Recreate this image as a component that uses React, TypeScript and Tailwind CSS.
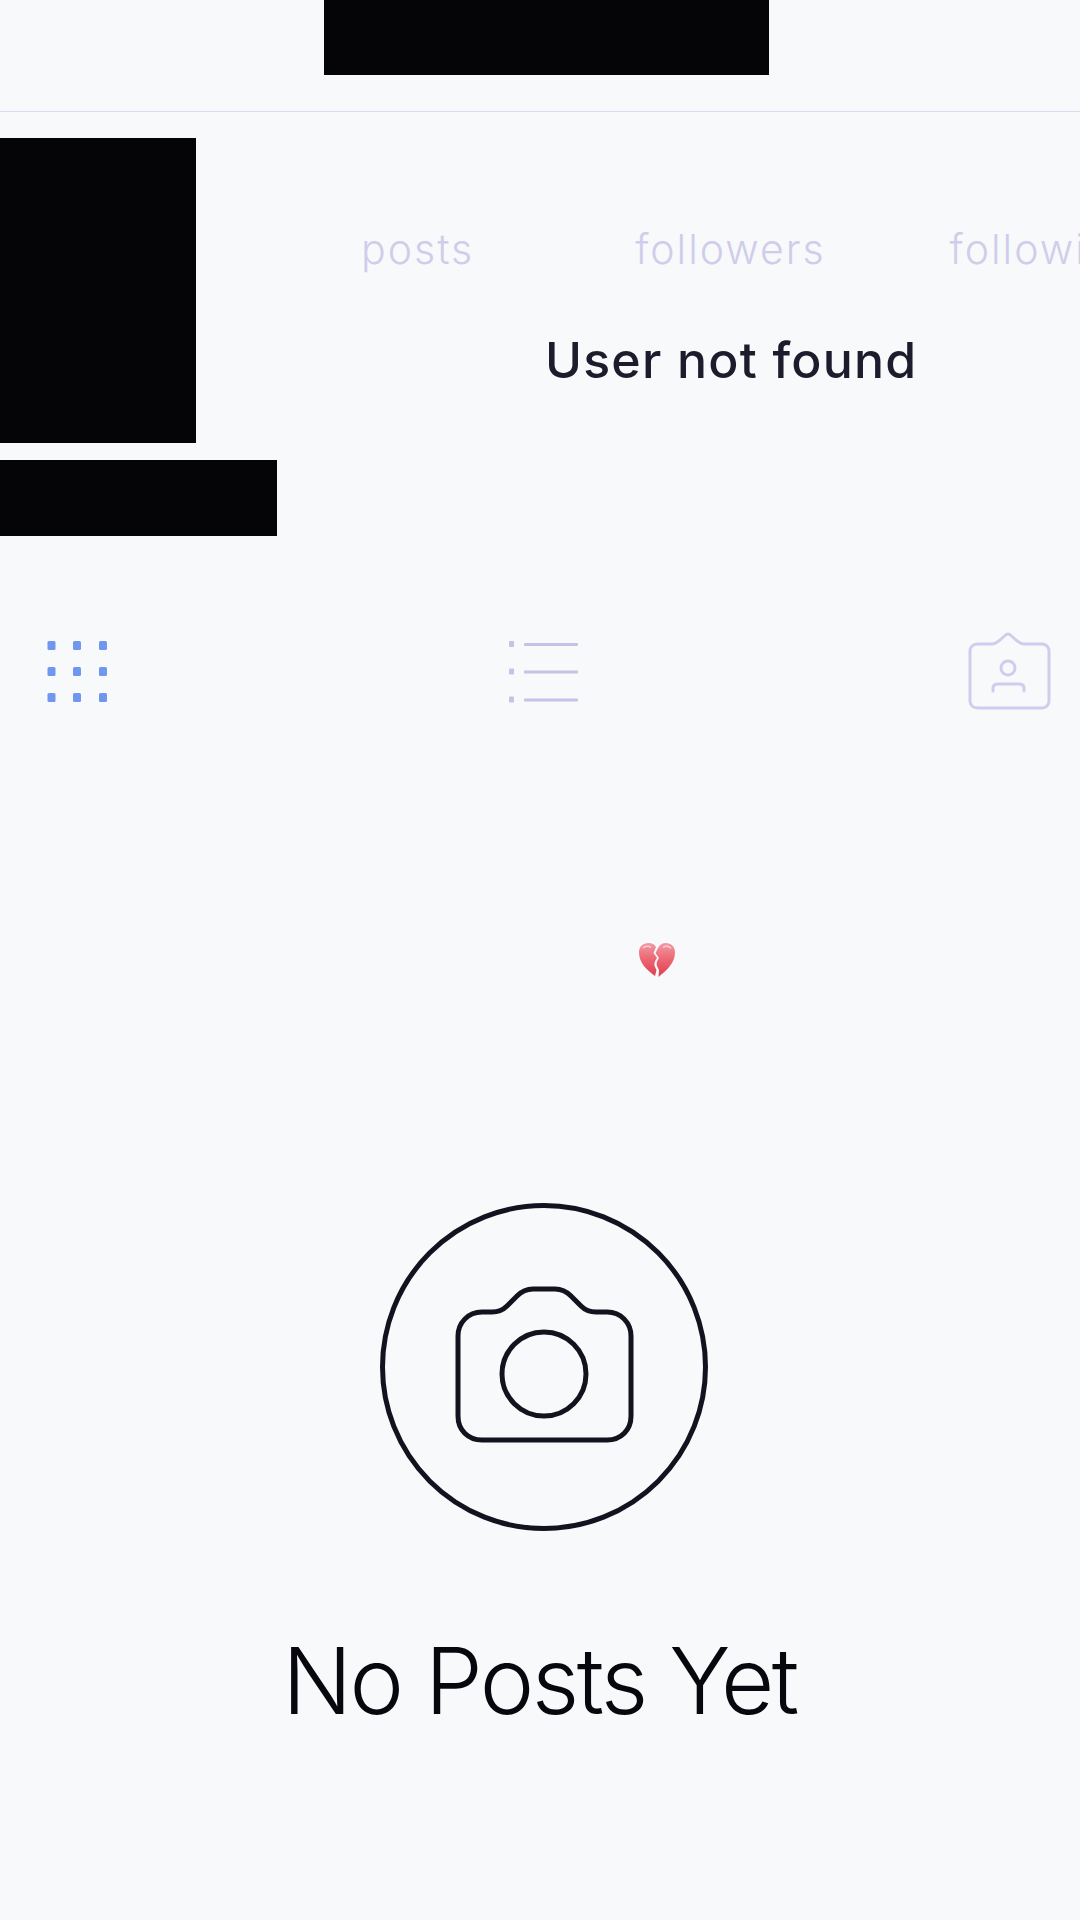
const font = { fontFamily: 'Inter, "Noto Sans", sans-serif' };

function GridIcon() {
  const xs = [24.500, 50, 76];
  const ys = [21.500, 47.500, 73.500];
  return (
    <svg width="100" height="90" viewBox="0 0 100 90" fill="#6f97ef">
      {ys.map((y) => xs.map((x) => <rect key={`${x}-${y}`} x={x - 4} y={y - 4.5} width="8" height="9" rx="1.5" />))}
    </svg>
  );
}

function ListIcon() {
  return (
    <svg width="100" height="90" viewBox="0 0 100 90" fill="#c5c2e6" stroke="none">
      {[20, 47.500, 75.500].map((y) => (
        <g key={y}>
          <rect x="16" y={y - 3} width="5" height="6" rx="1" />
          <rect x="31" y={y - 1} width="54" height="3" rx="1" />
        </g>
      ))}
    </svg>
  );
}

function TagIcon() {
  return (
    <svg width="100" height="90" viewBox="0 0 100 90" fill="none" stroke="#cfcdee" strokeWidth="3" strokeLinecap="round" strokeLinejoin="round">
      <path d="M19 20 H33 C37 20 38 18 41 16 L46 11.500 C48 9.500 50 9.500 52 11.500 L57 16 C60 18 61 20 65 20 H83 C87 20 90 23 90 27 V77 C90 81 87 84 83 84 H19 C14 84 11 81 11 77 V27 C11 23 14 20 19 20 Z" />
      <circle cx="49" cy="44" r="7" />
      <path d="M34 67 V64 C34 61 36 60 39 60 H60 C63 60 65 61 65 64 V67" />
    </svg>
  );
}

function BrokenHeart() {
  return (
    <svg width="38" height="36" viewBox="0 0 38 36">
      <defs>
        <linearGradient id="heart" x1="0" y1="0" x2="0" y2="1">
          <stop offset="0" stopColor="#f19aa3" />
          <stop offset="0.5" stopColor="#ec6572" />
          <stop offset="1" stopColor="#de3f50" />
        </linearGradient>
      </defs>
      <path d="M17 34 C9 28 1 21 1 10.500 C1 4.500 5 1 10.500 1 C14 1 16.500 2.500 18 5 L15.500 11 L19 16 C17 19 16 21 16.500 24 L18.500 28 Z" fill="url(#heart)" />
      <path d="M20.500 35 C29 28 37 21 37 10.500 C37 4.500 33 1 28 1 C24 1 21.500 3 20 6 L17.500 11 L21 16 C19 19 18 21 19 24 L21 28 Z" fill="url(#heart)" />
      <path d="M5 6 C7 4 11 3.500 13 5.500" stroke="#f9cdd2" strokeWidth="1.500" fill="none" />
      <path d="M25 5.500 C28 3.500 31 4 33 6.500" stroke="#f9cdd2" strokeWidth="1.500" fill="none" />
    </svg>
  );
}

function CameraIcon() {
  return (
    <svg width="330" height="330" viewBox="0 0 330 330" fill="none" stroke="#15121f" strokeWidth="5">
      <circle cx="165" cy="164" r="161.500" />
      <path d="M103 109 H113 C120 109 124 107 128 103 L138 93 C143 88 148 86 154 86 H176 C182 86 187 88 192 93 L202 103 C206 107 210 109 217 109 H228 C242 109 252 120 252 133 V213 C252 227 242 237 228 237 H103 C89 237 79 227 79 213 V133 C79 120 89 109 103 109 Z" strokeLinejoin="round" />
      <circle cx="165" cy="171" r="42" />
    </svg>
  );
}

export default function App() {
  return (
    <div className="w-[1080px] h-[1920px] overflow-hidden bg-[#f8f9fb]" style={font}>
      <header className="h-[112px] border-b border-[#dcdcf0] pl-[324px]">
        <div className="w-[445px] h-[75px] bg-[#050507]" />
      </header>

      <section className="flex mt-[26px] h-[398px]">
        <div className="w-[277px] shrink-0">
          <div className="w-[196px] h-[305px] bg-[#050507]" />
          <div className="w-[277px] h-[76px] mt-[17px] bg-[#050507]" />
        </div>
        <div className="flex-1 min-w-0">
          <div className="flex mt-[83px] pl-[84px] gap-[161px] whitespace-nowrap text-[41px] leading-[56px] font-light tracking-[2px] text-[#cfcdea]">
            <span>posts</span>
            <span>followers</span>
            <span className="-ml-[37px]">following</span>
          </div>
          <p className="mt-[55px] pl-[268px] whitespace-nowrap text-[50px] leading-[56px] font-medium tracking-[1.2px] text-[#1e1c2c]">User not found</p>
        </div>
      </section>

      <nav className="flex justify-between pl-[27px] pr-[21px] mt-[88px]">
        <GridIcon />
        <ListIcon />
        <TagIcon />
      </nav>

      <div className="pl-[638px] mt-[228px]">
        <BrokenHeart />
      </div>

      <main className="flex flex-col items-center pl-[7px] mt-[225px]">
        <CameraIcon />
        <h1 className="mt-[88px] -ml-[8px] text-[92px] leading-[120px] font-light tracking-[-2.5px] text-[#08070e] whitespace-nowrap">No Posts Yet</h1>
      </main>
    </div>
  );
}
